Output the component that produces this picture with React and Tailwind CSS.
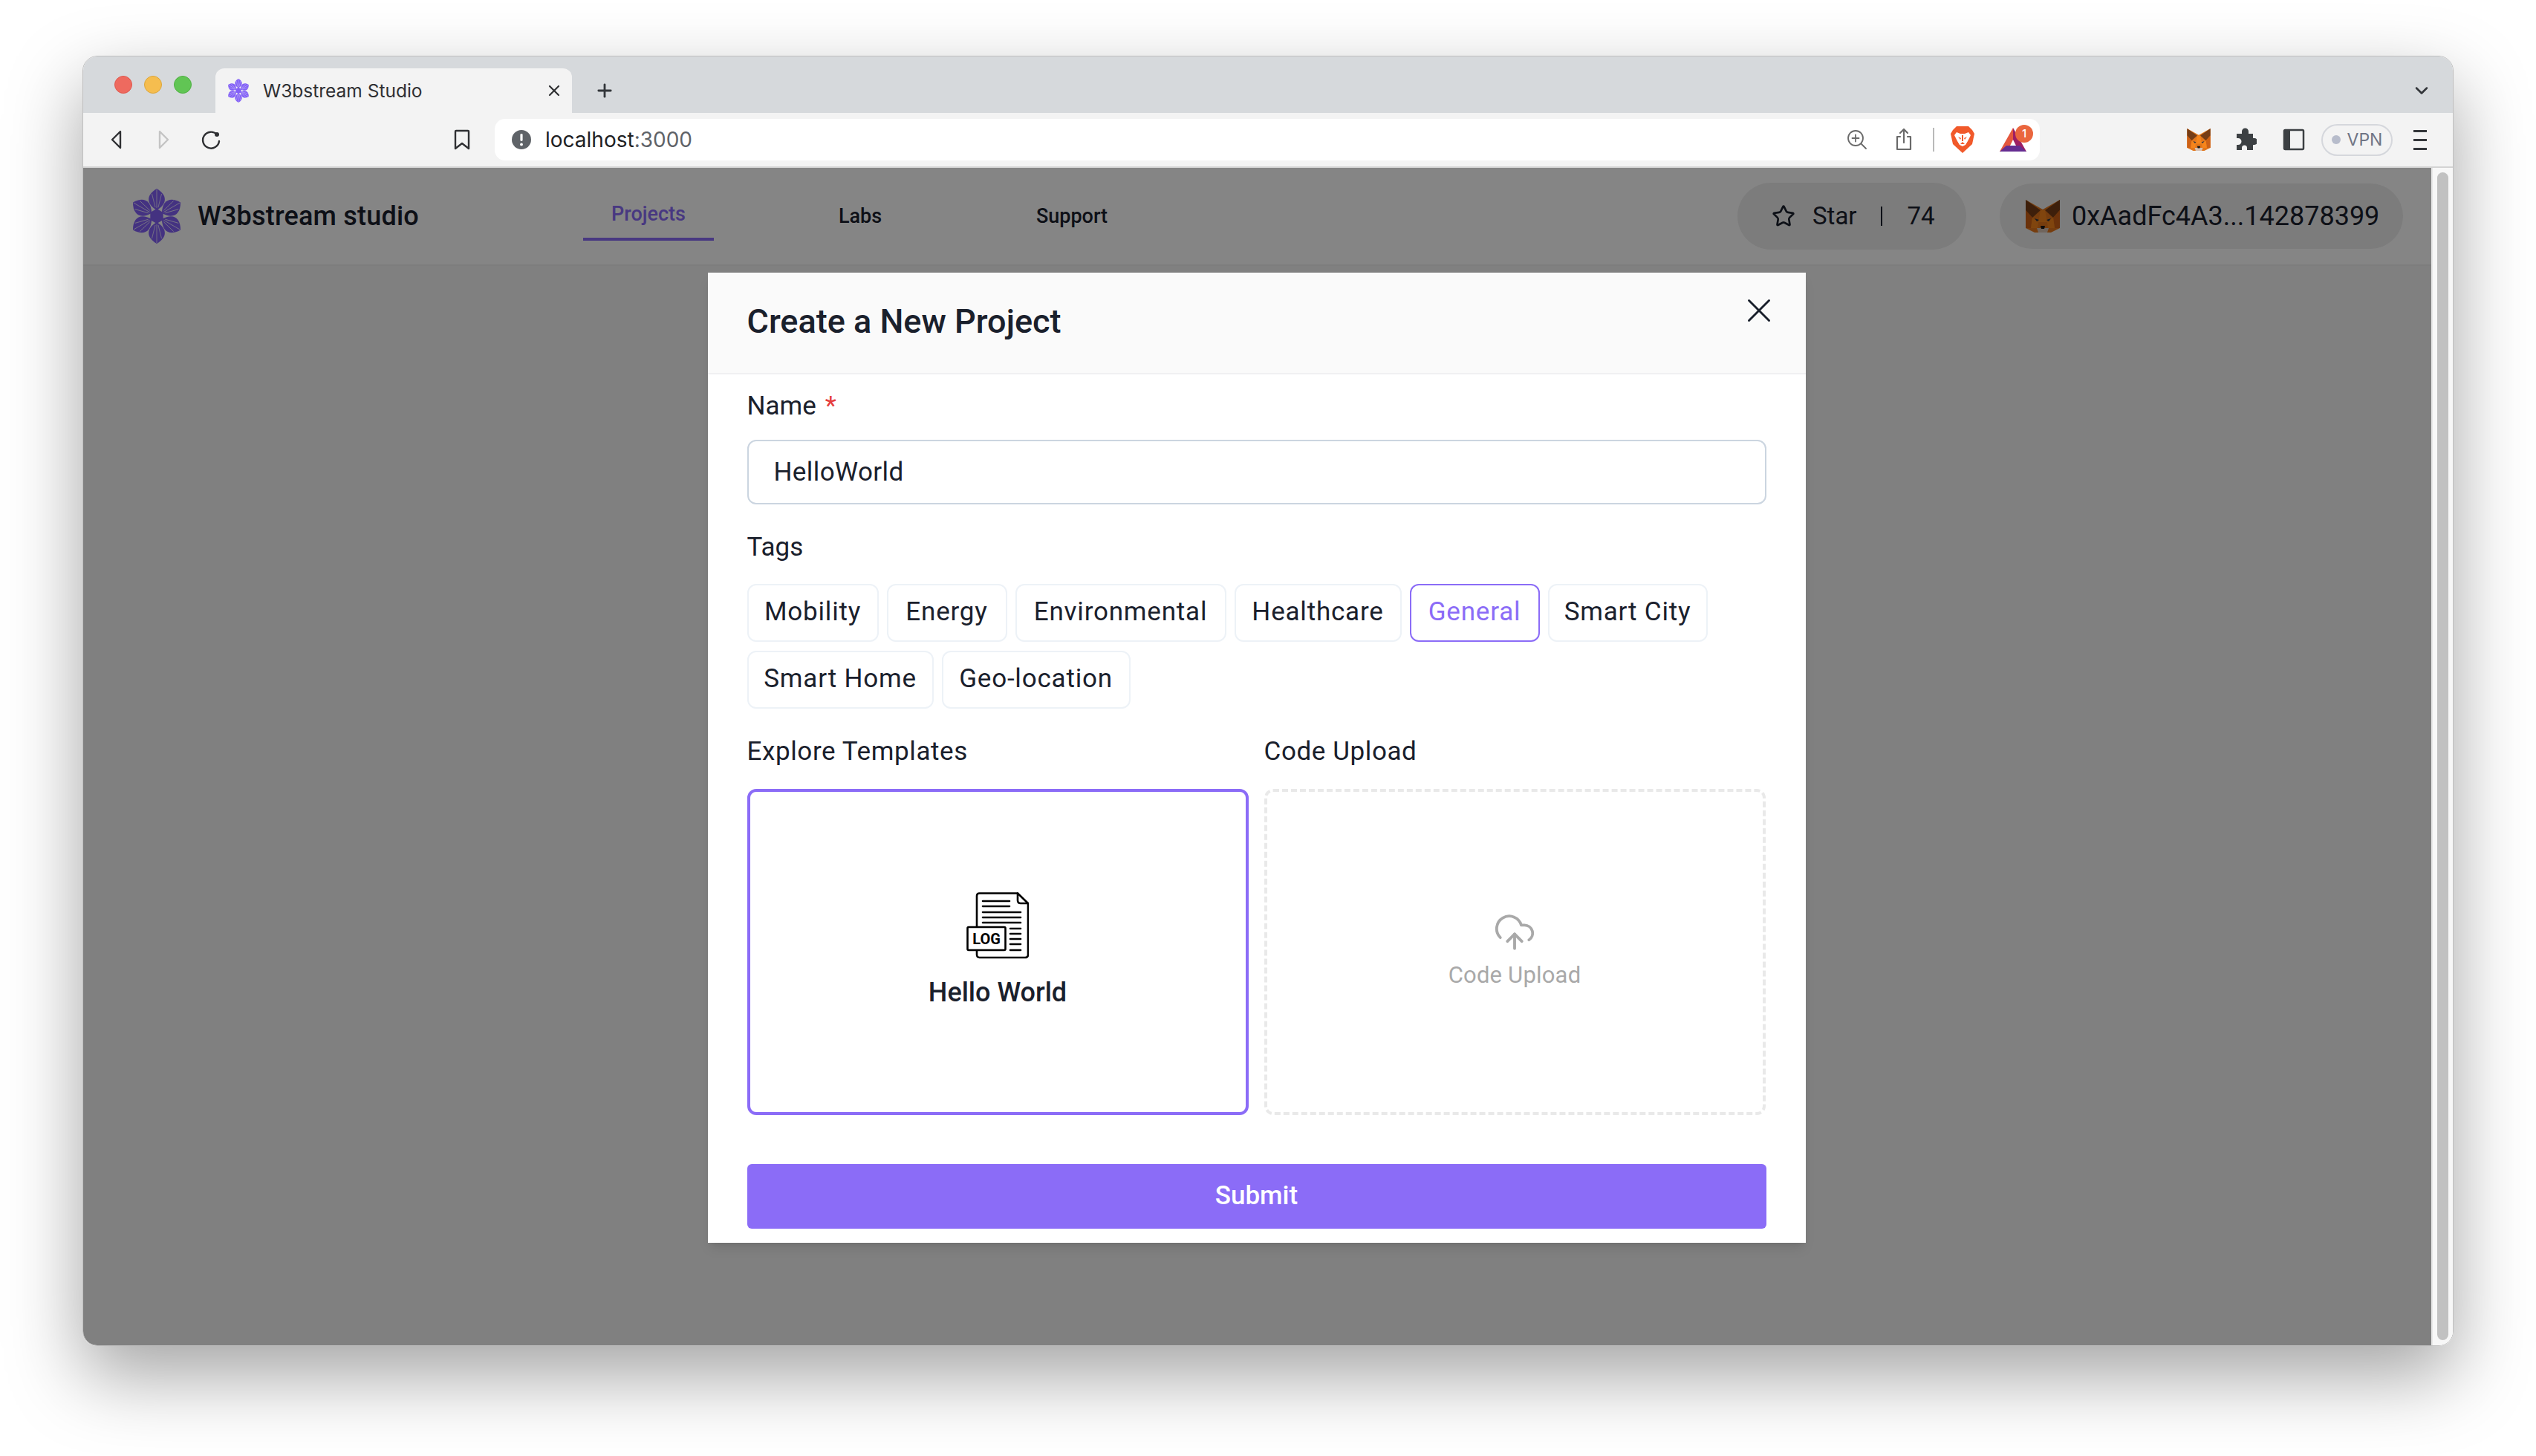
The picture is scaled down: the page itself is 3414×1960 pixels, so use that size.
import { ChevronDown, CloudUpload, Plus, Star, X } from "lucide-react";

const tagRows = [
  [
    { label: "Mobility", width: "w-[177px]" },
    { label: "Energy", width: "w-[162px]" },
    { label: "Environmental", width: "w-[284px]" },
    { label: "Healthcare", width: "w-[225px]" },
    { label: "General", width: "w-[175px]", active: true },
    { label: "Smart City", width: "w-[215px]" },
  ],
  [
    { label: "Smart Home", width: "w-[251px]" },
    { label: "Geo-location", width: "w-[254px]" },
  ],
];

function Flower({ className, petal = "#8361f7", ray = "#ffffff" }) {
  return (
    <svg viewBox="-33 -37 66 74" className={className}>
      {[0, 60, 120, 180, 240, 300].map((angle) => (
        <g key={angle} transform={`rotate(${angle})`}>
          <path d="M0 -8 C-15 -17 -14 -29 0 -37 C14 -29 15 -17 0 -8Z" fill={petal} />
          <path d="M0 -11 L0 -36 M-2 -12 L-6.5 -30 M2 -12 L6.5 -30" stroke={ray} strokeWidth="0.7" />
        </g>
      ))}
      <path d="M0 -10 L8.7 -5 L8.7 5 L0 10 L-8.7 5 L-8.7 -5Z" fill={petal} />
    </svg>
  );
}

function Fox({ className }) {
  return (
    <svg viewBox="0 0 46 44" className={className}>
      <path d="M0 0 L23 13 L46 0 L46 38 L34 44 L12 44 L0 38Z" fill="#e2761b" />
      <path d="M0 0 L20 14 L9 24 L0 14Z" fill="#763d16" />
      <path d="M46 0 L26 14 L37 24 L46 14Z" fill="#763d16" />
      <path d="M0 14 L9 24 L7 38 L0 38Z" fill="#cd6116" />
      <path d="M46 14 L37 24 L39 38 L46 38Z" fill="#cd6116" />
      <path d="M20 14 L26 14 L29 30 L17 30Z" fill="#f6851b" />
      <path d="M9 24 L17 30 L16 38 L7 38Z" fill="#f6851b" />
      <path d="M37 24 L29 30 L30 38 L39 38Z" fill="#f6851b" />
      <path d="M12 25 L18 27 L15 29Z M34 25 L28 27 L31 29Z" fill="#233447" />
      <path d="M15 38 L31 38 L29 44 L17 44Z" fill="#d7c1b3" />
      <path d="M20 35 L26 35 L25 39 L21 39Z" fill="#161616" />
    </svg>
  );
}

function LogIcon() {
  return (
    <svg viewBox="0 0 84 90" className="h-[90px] w-[84px]" fill="none" stroke="#000" strokeWidth="2.6" strokeLinecap="round">
      <path d="M14 46 L14 5 Q14 1.5 17.5 1.5 L69 1.5 L83 15 L83 84 Q83 88 79 88 L17.5 88 Q14 88 14 84 L14 79" strokeLinejoin="round" />
      <path d="M69 1.5 L69 11 Q69 15 73 15 L83 15" strokeLinejoin="round" />
      <path d="M22 12 H58 M22 19 H58 M22 27 H73 M22 34 H73 M22 41 H73 M59 49 H73 M59 56 H73 M59 63 H73 M59 70 H73 M59 78 H73" />
      <rect x="1.5" y="47" width="51" height="31" rx="1.5" fill="#fff" />
      <text x="27" y="70" textAnchor="middle" fill="#000" stroke="none" fontSize="20" fontWeight="700" className="[font-family:Roboto,sans-serif]">LOG</text>
    </svg>
  );
}

function TabStrip() {
  return (
    <div className="flex h-[76px] items-center bg-[#d6d9dc] pl-[42px] pr-[28px]">
      <div className="flex gap-4">
        <span className="h-6 w-6 rounded-full border border-[#e0574d] bg-[#ee6a5f]" />
        <span className="h-6 w-6 rounded-full border border-[#dca63a] bg-[#f5bd4f]" />
        <span className="h-6 w-6 rounded-full border border-[#4fb043] bg-[#61c554]" />
      </div>
      <div className="ml-8 flex h-[60px] w-[480px] items-center self-end rounded-t-[12px] bg-[#f3f3f3] pl-4 pr-3">
        <Flower className="h-8 w-[30px]" ray="#f3f3f3" />
        <span className="ml-[18px] text-[24.5px] text-[#2f3033] [font-family:Inter,sans-serif]">W3bstream Studio</span>
        <X className="ml-auto h-6 w-6 text-[#2f3033]" strokeWidth={2.2} />
      </div>
      <Plus className="ml-[30px] mt-4 h-7 w-7 text-[#33363a]" strokeWidth={2.4} />
      <ChevronDown className="ml-auto mt-4 h-7 w-7 text-[#33363a]" strokeWidth={2.2} />
    </div>
  );
}

function Toolbar() {
  return (
    <div className="flex h-[74px] items-center border-b-2 border-[#d3d3d3] bg-[#f3f3f3] pl-[29px] [font-family:Inter,sans-serif]">
      <svg viewBox="0 0 32 32" className="h-8 w-8" fill="none" stroke="#2f3033" strokeWidth="2.4" strokeLinejoin="round">
        <path d="M21 5 L21 27 L10 16Z" />
      </svg>
      <svg viewBox="0 0 32 32" className="ml-[31px] h-8 w-8" fill="none" stroke="#c4c4c4" strokeWidth="2.4" strokeLinejoin="round">
        <path d="M11 5 L11 27 L22 16Z" />
      </svg>
      <svg viewBox="0 0 32 32" className="ml-8 h-8 w-8" fill="none" stroke="#2f3033" strokeWidth="2.4" strokeLinecap="round">
        <path d="M24 9 A11 11 0 1 0 27 18" />
        <circle cx="24" cy="9" r="3" fill="#2f3033" stroke="none" />
      </svg>
      <svg viewBox="0 0 32 32" className="ml-[306px] h-8 w-8" fill="none" stroke="#2f3033" strokeWidth="2.4" strokeLinejoin="round">
        <path d="M7 5 Q7 4 8 4 L24 4 Q25 4 25 5 L25 28 L16 21 L7 28Z" />
      </svg>

      <div className="ml-7 flex h-14 w-[2080px] items-center rounded-[14px] bg-white pl-[22px] pr-[18px]">
        <svg viewBox="0 0 28 28" className="h-7 w-7">
          <circle cx="14" cy="14" r="13" fill="#5f6368" />
          <rect x="12.4" y="6" width="3.2" height="10" rx="1.4" fill="#fff" />
          <circle cx="14" cy="20.4" r="1.9" fill="#fff" />
        </svg>
        <span className="ml-[18px] text-[28px] text-[#202124]">
          localhost<span className="text-[#5f6368]">:3000</span>
        </span>

        <div className="ml-auto flex items-center">
          <svg viewBox="0 0 28 28" className="h-7 w-7" fill="none" stroke="#6a6a6a" strokeWidth="1.8" strokeLinecap="round">
            <circle cx="12" cy="12" r="10" />
            <path d="M12 7.5 V16.5 M7.5 12 H16.5 M19.5 19.5 L26 26" />
          </svg>
          <svg viewBox="0 0 24 32" className="ml-[37px] h-8 w-6" fill="none" stroke="#6a6a6a" strokeWidth="2.2" strokeLinecap="round" strokeLinejoin="round">
            <path d="M7 12 H3 V29 H21 V12 H17 M12 20 V2 M7 7 L12 2 L17 7" />
          </svg>
          <span className="ml-[27px] h-8 w-0.5 bg-[#b9b9b9]" />
          <svg viewBox="0 0 32 36" className="ml-[22px] h-9 w-8">
            <path d="M8 0 H24 L29 5 L32 10 L29 24 L16 36 L3 24 L0 10 L3 5Z" fill="#f1592a" />
            <path d="M8 8 L13 10 H19 L24 8 L27 12 L23 20 L20 25 L16 27 L12 25 L9 20 L5 12Z" fill="#fff" />
            <path d="M10 14 L14 16 L13 18Z M22 14 L18 16 L19 18Z M13 24 H19 L16 21Z M15 12 H17 V20 H15Z" fill="#f1592a" />
          </svg>
          <div className="relative ml-[34px] h-8 w-9">
            <svg viewBox="0 0 36 32" className="h-8 w-9">
              <path d="M18 0 L0 32 L10 32 L18 16Z" fill="#e4573d" />
              <path d="M18 0 L36 32 L26 32 L18 16Z" fill="#9e1f63" />
              <path d="M0 32 L9 24 H27 L36 32Z" fill="#662d91" />
            </svg>
            <span className="absolute -right-[9px] -top-[4px] flex h-6 w-6 items-center justify-center rounded-full bg-[#ea663e] text-[15px] font-medium text-white">1</span>
          </div>
        </div>
      </div>

      <Fox className="ml-[198px] h-[30px] w-8" />
      <svg viewBox="0 0 30 32" className="ml-[32px] h-8 w-[30px]" fill="#3c4043">
        <path d="M3 8 H10 V5 A4.5 4.5 0 0 1 19 5 V8 H25 V14 H27 A4.5 4.5 0 0 1 27 23 H25 V30 H17 V27 A3.5 3.5 0 0 0 10 27 V30 H3 V23 H5 A4.5 4.5 0 0 0 5 14 H3Z" />
      </svg>
      <svg viewBox="0 0 32 32" className="ml-[34px] h-8 w-8" fill="none">
        <rect x="3" y="3" width="26" height="26" rx="1.5" stroke="#3c4043" strokeWidth="2.5" />
        <rect x="3" y="3" width="8" height="26" fill="#3c4043" />
      </svg>
      <div className="ml-[21px] flex h-[43px] w-24 items-center justify-center gap-[9px] rounded-full border-2 border-[#d5d7dc] text-[23px] text-[#6f7585]">
        <span className="h-3 w-3 rounded-full bg-[#b7bccb]" />
        VPN
      </div>
      <div className="ml-[21px] flex w-8 flex-col items-center gap-[9px]">
        <span className="h-[3px] w-[18px] bg-[#33363a]" />
        <span className="h-[3px] w-[18px] bg-[#33363a]" />
        <span className="h-[3px] w-[18px] bg-[#33363a]" />
      </div>
    </div>
  );
}

function AppHeader() {
  return (
    <header className="flex h-[132px] items-center border-b-2 border-[#f0f0f0] bg-white pl-[66px] pr-[38px] text-[#1a202c]">
      <Flower className="h-[74px] w-[66px]" />
      <div className="ml-[22px] w-[297px] whitespace-nowrap text-[36px] font-medium tracking-[0.2px]">W3bstream studio</div>
      <nav className="ml-[222px] flex gap-[109px] text-[27px] font-medium">
        <a className="flex h-[66px] w-[176px] items-center justify-center border-b-4 border-[#8b6cf7] pb-0.5 text-[#8b6cf7]">Projects</a>
        <a className="flex h-[66px] w-[176px] items-center justify-center">Labs</a>
        <a className="flex h-[66px] w-[176px] items-center justify-center">Support</a>
      </nav>
      <div className="ml-auto flex items-center gap-[45px] text-[33px]">
        <div className="flex h-[90px] w-[308px] items-center rounded-full bg-[#eeeeee] pl-[46px]">
          <Star className="h-8 w-8" strokeWidth={2} />
          <span className="ml-[23px]">Star</span>
          <span className="ml-8 h-[26px] w-0.5 bg-[#1a202c]" />
          <span className="ml-[34px]">74</span>
        </div>
        <div className="flex h-[88px] w-[543px] items-center rounded-full bg-[#eeeeee] pl-[35px] text-[36px]">
          <Fox className="h-11 w-[46px]" />
          <span className="ml-4 whitespace-nowrap">0xAadFc4A3...142878399</span>
        </div>
      </div>
    </header>
  );
}

function CreateProjectModal() {
  return (
    <div className="h-[1306px] w-[1478px] bg-white text-[#1a202c] shadow-lg">
      <div className="flex h-[137px] items-start justify-between border-b-2 border-[#f0f0f2] bg-[#fafafa] pl-[53px] pr-[36px]">
        <h2 className="mt-[38px] text-[45px] font-medium leading-[56px]">Create a New Project</h2>
        <X className="mt-[24px] h-[54px] w-[54px] text-[#1a202c]" strokeWidth={1.3} />
      </div>

      <div className="px-[53px] pb-4">
        <div className="mt-5 flex h-11 items-center text-[35px] leading-none">
          Name <span className="ml-3 text-[#e53e3e]">*</span>
        </div>
        <input
          readOnly
          value="HelloWorld"
          className="mt-6 block h-[87px] w-full rounded-[12px] border-2 border-[#cbd5e0] bg-white pl-[34px] text-[35px] tracking-[0.4px] outline-none"
        />

        <div className="mt-[35px] flex h-11 items-center text-[35px] leading-none">Tags</div>
        <div className="mt-7 flex flex-col gap-3">
          {tagRows.map((row, i) => (
            <div key={i} className="flex gap-[11px]">
              {row.map((tag) => (
                <span
                  key={tag.label}
                  className={`flex h-[78px] items-center justify-center rounded-[12px] border-2 pb-0.5 text-[35px] tracking-[0.8px] ${tag.width} ${
                    tag.active ? "border-[#8b6cf7] text-[#8b6cf7]" : "border-[#edf2f7]"
                  }`}
                >
                  {tag.label}
                </span>
              ))}
            </div>
          ))}
        </div>

        <div className="mt-[35px] flex h-11 gap-[21px] text-[35px] leading-none tracking-[0.6px]">
          <div className="flex w-[675px] items-center">Explore Templates</div>
          <div className="flex w-[675px] items-center">Code Upload</div>
        </div>
        <div className="mt-[29px] flex h-[439px] gap-[21px]">
          <div className="flex w-[675px] flex-col items-center rounded-[12px] border-4 border-[#8b6cf7] pt-[135px]">
            <LogIcon />
            <div className="mt-[22px] text-[36px] font-medium leading-[46px]">Hello World</div>
          </div>
          <div className="flex w-[675px] flex-col items-center rounded-[12px] border-4 border-dashed border-[#e9e9e9] pt-[160px] text-[#a9a9a9]">
            <CloudUpload className="h-[58px] w-[58px]" strokeWidth={1.6} />
            <div className="mt-[9px] text-[31px] leading-[40px] tracking-[0.2px]">Code Upload</div>
          </div>
        </div>

        <button className="mt-[66px] flex h-[87px] w-full items-center justify-center rounded-[6px] bg-[#8b6cf7] text-[35px] font-medium text-white">
          Submit
        </button>
      </div>
    </div>
  );
}

function App() {
  return (
    <div className="h-[1960px] w-[3414px] overflow-hidden bg-white pl-[111px] pt-[75px] [font-family:Roboto,sans-serif]">
      <div className="flex h-[1737px] w-[3192px] flex-col overflow-hidden rounded-[20px] border border-[#bfbfbf] shadow-[0_40px_100px_rgba(0,0,0,0.36)]">
        <TabStrip />
        <Toolbar />
        <div className="flex min-h-0 flex-1">
          <main className="relative flex-1 bg-[#f6f6f6]">
            <AppHeader />
            <div className="absolute inset-0 flex items-start justify-center bg-black/48 pr-0.5 pt-[141px]">
              <CreateProjectModal />
            </div>
          </main>
          <div className="w-[29px] border-l-2 border-[#e8e8e8] bg-[#f7f7f7] px-[6px] pt-[6px]">
            <div className="h-[1572px] rounded-full bg-[#c1c1c1]" />
          </div>
        </div>
      </div>
    </div>
  );
}

export default App;
